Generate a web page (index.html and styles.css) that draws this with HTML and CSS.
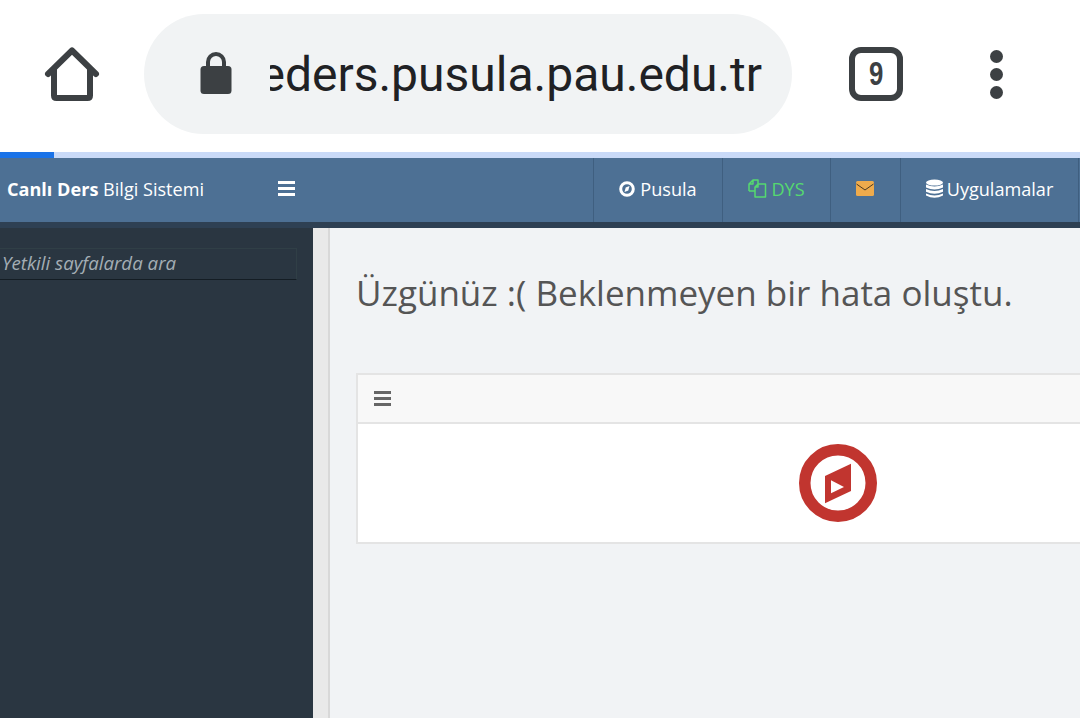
FILE: index.html
```html
<!DOCTYPE html>
<html lang="en">

<head>
    <meta charset="UTF-8">
    <meta name="viewport" content="width=device-width, initial-scale=1.0">
    <title>Canlı Ders Bilgi Sistemi</title>
    <link rel="stylesheet" href="styles.css">
</head>

<body>

    <!-- browser toolbar -->
    <div class="toolbar">
        <svg class="homeIcon" width="56" height="56" viewBox="0 0 56 56">
            <path d="M4 28 L28 4.500 L52 28 M10 23 V49.500 Q10 52 12.500 52 H43.500 Q46 52 46 49.500 V23" fill="none" stroke="#3c4043" stroke-width="6" stroke-linecap="round" stroke-linejoin="round" />
        </svg>
        <div class="urlBar">
            <svg class="lockIcon" width="32" height="42" viewBox="0 0 32 42">
                <path d="M8 16 V10 A8 8 0 0 1 24 10 V16" fill="none" stroke="#3c4043" stroke-width="4" />
                <rect x="0.500" y="14" width="31" height="28" rx="3.500" fill="#3c4043" />
            </svg>
            <div class="urlClip"><span>canlieders.pusula.pau.edu.tr</span></div>
        </div>
        <div class="tabCount"><span>9</span></div>
        <div class="dots"><i></i><i></i><i></i></div>
    </div>

    <div class="progress"><div class="progressDone"></div></div>

    <!-- site header -->
    <div class="navbar">
        <div class="brand"><b>Canlı Ders</b> Bilgi Sistemi</div>
        <div class="burger"><i></i><i></i><i></i></div>
        <div class="navItems">
            <div class="navItem pusula">
                <svg width="16" height="16" viewBox="0 0 16 16">
                    <circle cx="8" cy="8" r="6.300" fill="none" stroke="#fff" stroke-width="3" />
                    <path d="M10.500 5 L9.300 9.500 L5.500 11 L6.700 6.500 Z" fill="#fff" />
                </svg>
                Pusula
            </div>
            <div class="navItem dys">
                <svg width="19" height="19" viewBox="0 0 19 19">
                    <path d="M1 12 V5 L5 1 H10 V5 M5 1 V5 H1 M1 12 H7 M7 8 L10 5 H17.500 V18 H7 Z M10 5 V8 H7" fill="none" stroke="#55d96f" stroke-width="1.500" stroke-linejoin="round" />
                </svg>
                DYS
            </div>
            <div class="navItem mail">
                <svg width="18" height="15" viewBox="0 0 18 15">
                    <rect width="18" height="15" rx="1.500" fill="#efab4c" />
                    <path d="M0.500 3 L9 9 L17.500 3" fill="none" stroke="#4a3a25" stroke-width="1" />
                </svg>
            </div>
            <div class="navItem apps">
                <svg width="17" height="20" viewBox="0 0 18 20">
                    <ellipse cx="9" cy="3.200" rx="9" ry="3.200" fill="#fff" />
                    <path d="M0 5.300 Q9 9.500 18 5.300 V8.300 Q9 12.500 0 8.300 Z M0 10 Q9 14.200 18 10 V13 Q9 17.200 0 13 Z M0 14.700 Q9 18.900 18 14.700 V16.800 Q9 21.500 0 16.800 Z" fill="#fff" />
                </svg>
                Uygulamalar
            </div>
        </div>
    </div>

    <div class="page">
        <div class="sidebar">
            <input class="search" type="text" placeholder="Yetkili sayfalarda ara">
        </div>
        <div class="gutter"></div>
        <div class="content">
            <h1>Üzgünüz :( Beklenmeyen bir hata oluştu.</h1>
            <div class="panel">
                <div class="panelHead">
                    <div class="panelBurger"><i></i><i></i><i></i></div>
                </div>
                <div class="panelBody">
                    <svg width="78" height="78" viewBox="0 0 78 78">
                        <circle cx="39" cy="39" r="33.250" fill="none" stroke="#c1352f" stroke-width="11.500" />
                        <path d="M26 32 L52 19.700 V47 L26 59.300 Z" fill="#c1352f" />
                        <path d="M32 36.300 V49.300 L45 43 Z" fill="#fff" />
                    </svg>
                </div>
            </div>
        </div>
    </div>

</body>

</html>
```

FILE: styles.css
```css
* {
    box-sizing: border-box;
}

body {
    margin: 0;
    height: 718px;
    overflow: hidden;
    display: flex;
    flex-direction: column;
    background-color: white;
    font-family: "Open Sans", sans-serif;
}

.toolbar {
    height: 152px;
    flex-shrink: 0;
    display: flex;
    align-items: center;
    padding: 0 0 4px 44px;
}

.homeIcon {
    flex-shrink: 0;
    margin-right: 44px;
}

.urlBar {
    width: 648px;
    height: 120px;
    flex-shrink: 0;
    border-radius: 60px;
    background-color: #f1f3f4;
    display: flex;
    align-items: center;
    padding-left: 56px;
}

.lockIcon {
    flex-shrink: 0;
    margin-right: 38px;
    margin-top: -2px;
}

.urlClip {
    width: 492px;
    overflow: hidden;
    display: flex;
    justify-content: flex-end;
    white-space: nowrap;
    font-family: Roboto, sans-serif;
    font-size: 48px;
    color: #202124;
}

.tabCount {
    width: 54px;
    height: 54px;
    margin-left: 57px;
    flex-shrink: 0;
    border: 6px solid #3c4043;
    border-radius: 12px;
    display: flex;
    align-items: center;
    justify-content: center;
    font-family: "Liberation Sans", sans-serif;
    font-size: 33px;
    font-weight: bold;
    color: #3c4043;
}

.tabCount span {
    transform: scaleX(0.78);
}

.dots {
    margin-left: 87px;
    display: flex;
    flex-direction: column;
    gap: 5px;
}

.dots i {
    display: block;
    width: 13px;
    height: 13px;
    border-radius: 50%;
    background-color: #3c4043;
}

.progress {
    height: 6px;
    flex-shrink: 0;
    background-color: #c9daf8;
}

.progressDone {
    width: 54px;
    height: 6px;
    background-color: #1a73e8;
}

.navbar {
    height: 70px;
    flex-shrink: 0;
    display: flex;
    background-color: #4d7094;
    border-bottom: 6px solid #2e4053;
    color: white;
    font-size: 18.100px;
}

.brand {
    width: 278px;
    padding: 0 0 3px 7px;
    display: flex;
    align-items: center;
    white-space: pre;
}

.burger {
    width: 315px;
    padding-bottom: 3px;
    display: flex;
    flex-direction: column;
    justify-content: center;
    gap: 3px;
}

.burger i {
    display: block;
    width: 17px;
    height: 3px;
    background-color: white;
}

.navItems {
    display: flex;
}

.navItem {
    display: flex;
    align-items: center;
    justify-content: center;
    gap: 4px;
    padding-bottom: 3px;
    border-left: 1px solid #3f5f80;
    white-space: nowrap;
}

.pusula {
    width: 129px;
    gap: 5px;
}

.dys {
    width: 108px;
    color: #55d96f;
}

.mail {
    width: 70px;
    padding-right: 2px;
}

.apps {
    width: 179px;
    gap: 4px;
    border-right: 1px solid #3f5f80;
}

.page {
    flex: 1;
    display: flex;
    min-height: 0;
}

.sidebar {
    width: 313px;
    flex-shrink: 0;
    padding-top: 20px;
    background-color: #2a3641;
}

.search {
    display: block;
    width: 297px;
    height: 32px;
    padding: 0 2px 4px;
    border: 1px solid #303f46;
    border-bottom-color: #141d24;
    border-left: 0;
    background-color: #2a3641;
    font-family: "Open Sans", sans-serif;
    font-size: 18.700px;
    font-style: italic;
}

.search::placeholder {
    color: #a4aeb5;
    opacity: 1;
}

.gutter {
    width: 17px;
    flex-shrink: 0;
    background-color: #e9e9e9;
    border-right: 2px solid #d8d8d8;
}

.content {
    flex: 1;
    min-width: 0;
    overflow: hidden;
    padding: 42px 0 0 26px;
    background-color: #f1f3f5;
}

h1 {
    margin: 0 0 57px;
    height: 46px;
    font-size: 35px;
    font-weight: 400;
    line-height: 46px;
    white-space: nowrap;
    color: #555;
}

.panel {
    width: 964px;
    border: 2px solid #e4e4e4;
    background-color: white;
}

.panelHead {
    height: 49px;
    display: flex;
    align-items: center;
    padding-left: 16px;
    background-color: #f8f8f8;
    border-bottom: 2px solid #e4e4e4;
}

.panelBurger {
    display: flex;
    flex-direction: column;
    gap: 3px;
}

.panelBurger i {
    display: block;
    width: 17px;
    height: 3px;
    background-color: #666;
}

.panelBody {
    height: 118px;
    padding-bottom: 1px;
    display: flex;
    align-items: center;
    justify-content: center;
}
```
